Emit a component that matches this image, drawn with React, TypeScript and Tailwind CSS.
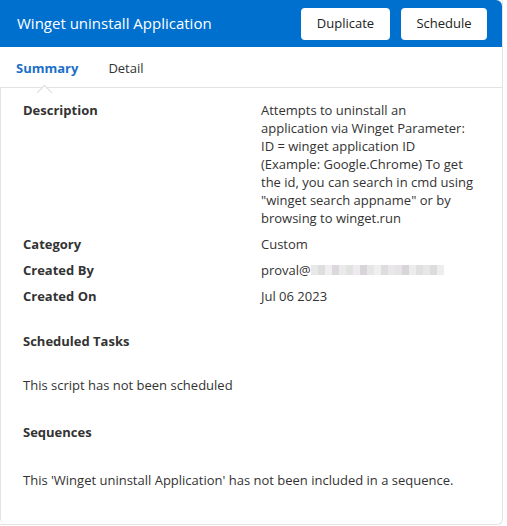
import { useState } from "react";

const rows = [
  {
    label: "Description",
    value:
      'Attempts to uninstall an application via Winget Parameter: ID = winget application ID (Example: Google.Chrome) To get the id, you can search in cmd using "winget search appname" or by browsing to winget.run',
  },
  { label: "Category", value: "Custom" },
  { label: "Created By", value: "proval@" },
  { label: "Created On", value: "Jul 06 2023" },
];

function Blurred() {
  // pixelated, redacted part of the email
  const cells = ["#e8e8e8", "#dedede", "#efefef", "#dcd8de", "#eaeaea", "#e2e2e2", "#edebee", "#d9d4da", "#e6e6e6", "#efefef", "#dddddd", "#e9e7ea", "#e4e4e4", "#d8d4d9", "#ececec", "#e0e0e0", "#e7e7e7", "#dcdcdc", "#ededed"];
  return (
    <span className="inline-flex h-[10px] align-[0px]">
      {cells.map((c, i) => (
        <span key={i} className="w-[7px] h-full" style={{ backgroundColor: c }} />
      ))}
    </span>
  );
}

export default function App() {
  const [tab, setTab] = useState("summary");

  return (
    <div className="w-[507px] h-[526px] bg-white font-['Open_Sans',sans-serif] text-[13px] text-[#333]">
      <div className="w-[503px] h-[525px] flex flex-col border-r border-b border-[#e3e3e3] rounded-br-md">
        {/* header */}
        <div className="h-[47px] bg-[#0070cf] rounded-tr-md flex items-center justify-between pl-[17px] pr-[15px]">
          <h1 className="text-white text-[15px]">Winget uninstall Application</h1>
          <div className="flex gap-[11px]">
            <button className="h-[32px] w-[89px] bg-white rounded text-[13px] text-[#222]">Duplicate</button>
            <button className="h-[32px] w-[86px] bg-white rounded text-[13px] text-[#222]">Schedule</button>
          </div>
        </div>

        {/* tabs */}
        <div className="h-[40px] flex items-center gap-[30px] pl-[16px] pt-[3px]">
          <button
            onClick={() => setTab("summary")}
            className={"relative font-bold " + (tab === "summary" ? "text-[#1b6fc8]" : "text-[#333]")}
          >
            Summary
            {tab === "summary" && (
              <span className="absolute left-[23px] top-[28px] w-[11px] h-[11px] bg-white border-l border-t border-[#dcdcdc] rotate-45" />
            )}
          </button>
          <button onClick={() => setTab("detail")} className="text-[#333]">
            Detail
          </button>
        </div>

        {/* panel */}
        <div className="flex-1 border-t border-l border-[#e3e3e3] rounded-bl-md pl-[22px] pr-[23px] pt-[13px] leading-[18px]">
          <div className="grid grid-cols-[238px_1fr] gap-y-[8px]">
            {rows.map((r) => (
              <div key={r.label} className="contents">
                <div className="font-bold">{r.label}</div>
                <div className="w-[213px]">
                  {r.value}
                  {r.label === "Created By" && <Blurred />}
                </div>
              </div>
            ))}
          </div>

          <h2 className="font-bold mt-[27px]">Scheduled Tasks</h2>
          <p className="mt-[26px]">This script has not been scheduled</p>

          <h2 className="font-bold mt-[29px]">Sequences</h2>
          <p className="mt-[30px]">This 'Winget uninstall Application' has not been included in a sequence.</p>
        </div>
      </div>
    </div>
  );
}
